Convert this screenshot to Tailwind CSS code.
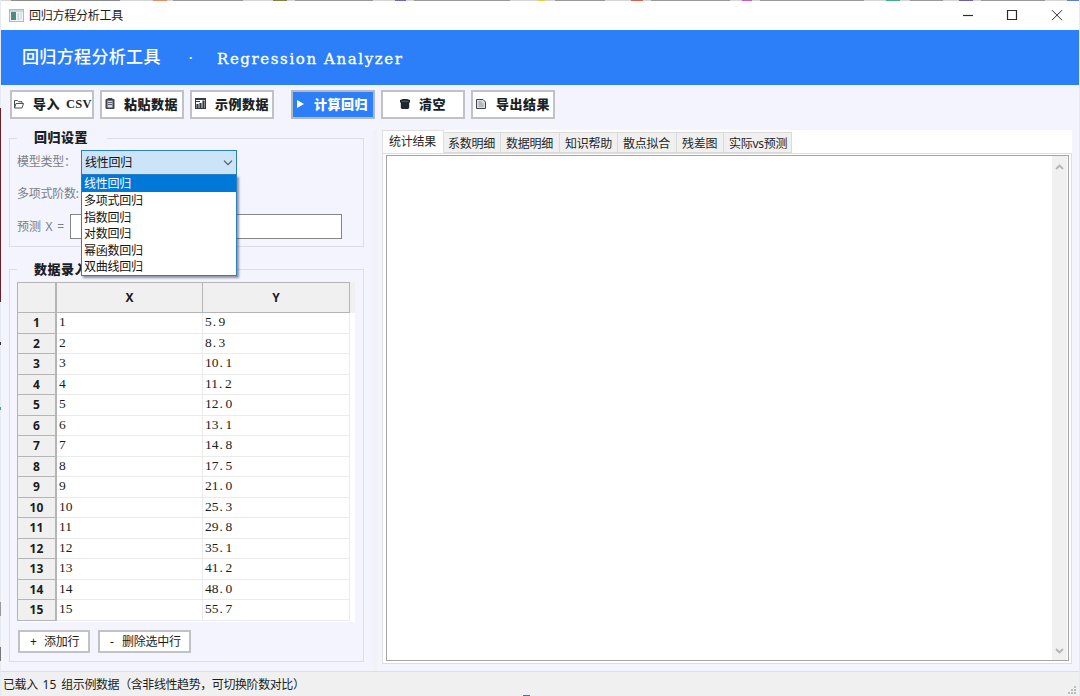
<!DOCTYPE html>
<html lang="zh-CN">
<head>
<meta charset="utf-8">
<title>回归方程分析工具</title>
<script src="https://cdn.jsdelivr.net/npm/@tailwindcss/browser@4"></script>
</head>
<body class="w-[1080px] h-[696px] overflow-hidden bg-[#f3f4fd] font-['Noto_Sans','Noto_Sans_CJK_SC',sans-serif] text-[12px] tracking-[-0.25px] text-[#1c1c1c] relative">
<div class="flex h-full flex-col border-x border-[#e6eaf3]">
  <!-- strip of the desktop above the window -->
  <div class="flex h-px shrink-0 bg-[#d5d5d5]"><i class="ml-[10px] w-[110px] bg-[#8d8d8d]"></i><i class="ml-[33px] w-[14px] bg-[#e28a62]"></i><i class="ml-[6px] w-[70px] bg-[#999]"></i><i class="ml-[30px] w-[14px] bg-[#7f8144]"></i><i class="ml-[8px] w-[78px] bg-[#999]"></i><i class="ml-[22px] w-[12px] bg-[#6a66c4]"></i><i class="ml-[8px] w-[96px] bg-[#999]"></i><i class="ml-[28px] w-[7px] bg-[#e6c74a]"></i><i class="ml-[10px] w-[50px] bg-[#999]"></i><i class="ml-[26px] w-[12px] bg-[#d8604f]"></i><i class="ml-[8px] w-[80px] bg-[#999]"></i><i class="ml-[12px] w-[10px] bg-[#c95bc4]"></i><i class="ml-[8px] w-[104px] bg-[#999]"></i><i class="ml-[22px] w-[14px] bg-[#3fae8c]"></i><i class="ml-[10px] w-[34px] bg-[#999]"></i><i class="ml-[16px] w-[14px] bg-[#6a5fae]"></i><i class="ml-[8px] w-[64px] bg-[#999]"></i><i class="ml-[22px] w-[12px] bg-[#5b7fd8]"></i></div>
  <header class="flex h-[29px] shrink-0 items-center bg-white pl-2">
    <svg class="h-[13px] w-[15px]" viewBox="0 0 15 13"><rect x=".5" y=".5" width="14" height="12" fill="#f2f4f6" stroke="#b4b9bf"/><rect x="1" y="1" width="13" height="2" fill="#cfd5db"/><rect x="2" y="3" width="5" height="8" fill="#4d8d80"/><rect x="8.500" y="4" width="1.500" height="7" fill="#c3d3ea"/><rect x="11" y="3" width="2" height="8" fill="#dde2e6"/></svg>
    <span class="ml-[5px] leading-[16px]">回归方程分析工具</span>
    <svg class="relative -top-px ml-auto mr-[16px] h-[12px] w-[102px]" viewBox="0 0 102 12" fill="none" stroke="#2b2b2b"><path d="M2 6.500h10" stroke-width="1.200"/><path d="M46.500 1.500h9v9h-9z" stroke-width="1.200"/><path d="M91 1.200l10 10M101 1.200l-10 10"/></svg>
  </header>
  <div class="flex h-[55px] shrink-0 items-center bg-[#2d7ff9] pl-[21px] text-white">
    <span class="w-[167px] pb-[2px] text-[17px] font-medium leading-[22px] tracking-[0.35px]">回归方程分析工具</span>
    <span class="w-[28px] font-bold">·</span>
    <span class="pt-[2px] font-['DejaVu_Serif',serif] text-[15px] leading-[20px] tracking-[1.6px] [-webkit-text-stroke:0.3px_white]">Regression Analyzer</span>
  </div>
  <nav class="flex h-[45px] shrink-0 pl-[9px] pt-[5px] text-[13px] font-black tracking-[0.5px] text-[#1b1f27]">
    <div class="mr-[6px] flex h-[29px] w-[84px] items-center border-2 border-[#c0c2c6] bg-white pl-px pb-[2px]">
      <svg class="h-[10px] w-[11px] shrink-0" viewBox="0 0 11 10" fill="none" stroke="#4b4f57"><path d="M1.500 9V1.500h3l1 1.200h3.500V4.500M1.500 9L3 4.500h7.500L9 9z"/></svg>
      <span class="ml-[9px] whitespace-nowrap leading-[18px]">导入</span><span class="ml-[6px] font-['Liberation_Serif',serif] text-[12.5px] font-bold leading-[18px] tracking-[0.3px]">CSV</span>
    </div>
    <div class="mr-[6px] flex h-[29px] w-[84px] items-center border-2 border-[#c0c2c6] bg-white pl-[3px] pb-[2px]">
      <svg class="h-[11px] w-[10px] shrink-0" viewBox="0 0 10 11"><rect x=".5" y="1" width="9" height="10" rx="1" fill="#3e424b"/><rect x="2.500" y="2.500" width="5" height="7" fill="#d7d9dd"/><path d="M3 0h4v2H3zM3 4.500h4M3 6.500h4" stroke="#3e424b" stroke-width=".8" fill="#3e424b"/></svg>
      <span class="ml-[9px] whitespace-nowrap leading-[18px]">粘贴数据</span>
    </div>
    <div class="mr-[17px] flex h-[29px] w-[84px] items-center border-2 border-[#c0c2c6] bg-white pl-[3px] pb-[2px]">
      <svg class="h-[11px] w-[11px] shrink-0" viewBox="0 0 11 11"><rect x=".5" y=".5" width="10" height="10" fill="#fff" stroke="#343943"/><path d="M1 1.500h9M1 3.500h4" stroke="#343943"/><path d="M2.500 10V6M5.500 10V5M8.500 10V2.500" stroke="#343943" stroke-width="2.200"/></svg>
      <span class="ml-[9px] whitespace-nowrap leading-[18px]">示例数据</span>
    </div>
    <div class="mr-[6px] flex h-[29px] w-[84px] items-center border-2 border-[#b2b9c6] bg-[#2d7ff9] pl-[4px] pb-[2px] text-white">
      <svg class="h-[8px] w-[8px] shrink-0" viewBox="0 0 8 8" fill="#fff"><path d="M0 0l7 4L0 8z"/></svg>
      <span class="ml-[9px] whitespace-nowrap leading-[18px]">计算回归</span>
    </div>
    <div class="mr-[6px] flex h-[29px] w-[84px] items-center border-2 border-[#c0c2c6] bg-white pl-[17px] pb-[2px]">
      <svg class="h-[10px] w-[10px] shrink-0" viewBox="0 0 10 10"><path d="M0 1l3-1h4l3 1v2.500H9.200V9L8 10H2L.8 9V3.500H0z" fill="#20262f"/><path d="M1.500 2.300h7" stroke="#717780" stroke-width=".7"/></svg>
      <span class="ml-[9px] whitespace-nowrap leading-[18px]">清空</span>
    </div>
    <div class="flex h-[29px] w-[84px] items-center border-2 border-[#c0c2c6] bg-white pl-[3px] pb-[2px]">
      <svg class="h-[10px] w-[10px] shrink-0" viewBox="0 0 10 10"><path d="M.5 .5h6.500l2.500 2.500v6.500h-9z" fill="#dadce1" stroke="#41454e"/><path d="M2.500 3h3M2.500 5h5M2.500 7h5" stroke="#7b7f87" stroke-width=".8"/></svg>
      <span class="ml-[10px] whitespace-nowrap leading-[18px]">导出结果</span>
    </div>
  </nav>
  <main class="flex h-[541px] shrink-0">
    <section class="w-[372px] shrink-0 pl-[8px]">
      <fieldset class="relative mt-[8px] h-[109px] w-[355px] border border-[#dcdde5] text-[#7c7e84]">
        <b class="absolute left-[7px] top-[-11px] w-[90px] bg-[#f3f4fd] pl-[17px] text-[13px] font-black leading-[18px] tracking-[0.5px] text-[#1b1f27]">回归设置</b>
        <div class="flex flex-col pl-[7px] pt-[14px]">
          <div class="leading-[18px]">模型类型：</div>
          <div class="mt-[14px] leading-[18px]">多项式阶数:</div>
          <div class="mt-[11px] flex items-center"><span class="w-[53px] whitespace-nowrap leading-[18px] tracking-normal [word-spacing:1.5px]">预测 X =</span><span class="h-[25px] w-[272px] border border-[#858585] bg-white"></span></div>
        </div>
      </fieldset>
      <fieldset class="relative mt-[22px] h-[393px] w-[355px] border border-[#dcdde5]">
        <b class="absolute left-[7px] top-[-10px] w-[90px] bg-[#f3f4fd] pl-[17px] text-[13px] font-black leading-[18px] tracking-[0.5px] text-[#1b1f27]">数据录入</b>
        <div class="ml-[7px] mt-[12px] h-[340px] w-[338px] bg-white">
          <div class="flex h-[31px] bg-[#f0f0f0]"><div class="w-[40px] border border-r-2 border-[#b5b5b5]"></div><div class="flex w-[146px] items-center justify-center border-y border-r border-[#b5b5b5] font-bold">X</div><div class="flex w-[147px] items-center justify-center border-y border-r border-[#b5b5b5] font-bold">Y</div></div>
          <div id="rows"></div>
        </div>
        <div class="ml-[8px] mt-[8px] flex gap-[8px]">
          <div class="flex h-[23px] w-[72px] items-center border-2 border-[#c0c2c6] bg-white pl-[10px] leading-[18px]"><span class="w-[14px]">+</span>添加行</div>
          <div class="flex h-[23px] w-[93px] items-center border-2 border-[#c0c2c6] bg-white pl-[10px] leading-[18px]"><span class="w-[12px]">-</span>删除选中行</div>
        </div>
      </fieldset>
    </section>
    <div class="h-full w-[4px] bg-[#f2f2f6]"></div>
    <section class="ml-[5px] flex h-[534px] w-[690px] flex-col">
      <div class="flex h-[23px] shrink-0 items-end bg-white leading-[18px] text-[#262626]">
        <div class="h-[23px] w-[62px] border-x border-t border-[#dfdfdf] pl-[6px] pt-[2px]">统计结果</div>
        <div class="h-[21px] w-[57px] border-b border-r border-t border-[#dadada] bg-[#f0f0f0] pl-[4px] pt-[2px]">系数明细</div>
        <div class="h-[21px] w-[59px] border-b border-r border-t border-[#dadada] bg-[#f0f0f0] pl-[5px] pt-[2px]">数据明细</div>
        <div class="h-[21px] w-[58px] border-b border-r border-t border-[#dadada] bg-[#f0f0f0] pl-[5px] pt-[2px]">知识帮助</div>
        <div class="h-[21px] w-[59px] border-b border-r border-t border-[#dadada] bg-[#f0f0f0] pl-[5px] pt-[2px]">散点拟合</div>
        <div class="h-[21px] w-[47px] border-b border-r border-t border-[#dadada] bg-[#f0f0f0] pl-[5px] pt-[2px]">残差图</div>
        <div class="h-[21px] w-[68px] whitespace-nowrap border-b border-r border-t border-[#dadada] bg-[#f0f0f0] pl-[5px] pt-[2px]">实际vs预测</div>
      </div>
      <div class="h-[511px] border border-[#dfdfdf] bg-white pl-[3px] pr-[2px] pt-px pb-[2px]">
        <div class="flex h-full justify-end border border-[#a4a4a4] pr-px">
          <div class="flex w-[15px] flex-col items-center justify-between bg-[#f0f0f0] pt-[8px] pb-[6px]">
            <svg class="h-[6px] w-[9px]" viewBox="0 0 9 6" fill="none" stroke="#b4b4b4" stroke-width="1.800"><path d="M1 5l3.500-3.500L8 5"/></svg>
            <svg class="h-[6px] w-[9px]" viewBox="0 0 9 6" fill="none" stroke="#b4b4b4" stroke-width="1.800"><path d="M1 1l3.500 3.500L8 1"/></svg>
          </div>
        </div>
      </div>
    </section>
  </main>
  <footer class="flex h-[25px] shrink-0 items-center border-t border-[#dedfe2] bg-[#f0f0f0] pl-[2px]">
    <span class="pt-px leading-[18px] tracking-[-0.42px] [word-spacing:2px]">已载入 <span class="tracking-[0.2px]">15</span> 组示例数据（含非线性趋势，可切换阶数对比）</span>
    <svg class="ml-auto mr-[2px] mt-[13px] h-[9px] w-[9px]" viewBox="0 0 9 9" fill="#bcbcbc"><path d="M6 0h2v2H6zM6 3h2v2H6zM6 6h2v2H6zM3 3h2v2H3zM3 6h2v2H3zM0 6h2v2H0z"/></svg>
  </footer>
</div>
<!-- open model drop-down -->
<div class="absolute left-[81px] top-[150px] w-[156px] leading-[16px] text-[#111]">
  <div class="flex h-[25px] items-center border border-[#2a7fc0] bg-[#cce4f7] pl-[3px]">线性回归<svg class="ml-auto mr-[3px] h-[6px] w-[10px]" viewBox="0 0 10 6" fill="none" stroke="#505a64" stroke-width="1.200"><path d="M1 .7l4 4 4-4"/></svg></div>
  <div class="h-[101px] border border-t-0 border-[#2a7fc0] bg-white shadow-[2px_2px_2px_rgba(60,70,90,0.55)]">
    <div class="h-[17px] bg-[#0078d7] pl-[2px] pt-px text-white">线性回归</div>
    <div class="h-[16.600px] pl-[2px] pt-px">多项式回归</div>
    <div class="h-[16.600px] pl-[2px] pt-px">指数回归</div>
    <div class="h-[16.600px] pl-[2px] pt-px">对数回归</div>
    <div class="h-[16.600px] pl-[2px] pt-px">幂函数回归</div>
    <div class="h-[16.600px] pl-[2px] pt-px">双曲线回归</div>
  </div>
</div>
<!-- slivers of the desktop left of the window -->
<div class="absolute left-0 top-[108px] h-[194px] w-px bg-[#6b1f26]"></div>
<div class="absolute left-0 top-[342px] h-[3px] w-px bg-[#333]"></div>
<div class="absolute left-0 top-[407px] h-[3px] w-px bg-[#3aa58a]"></div>
<div class="absolute left-0 top-[602px] h-[14px] w-px bg-[#999]"></div>
<div class="absolute left-0 top-[647px] h-[14px] w-px bg-[#777]"></div>
<div class="absolute left-[523px] top-[695px] h-px w-[7px] bg-[#4a6fb0]"></div>
<script>
const ys = ['5.9','8.3','10.1','11.2','12.0','13.1','14.8','17.5','21.0','25.3','29.8','35.1','41.2','48.0','55.7'];
const mono = s => s.replace('.', '<span class="inline-block w-[6.800px] pl-px">.</span>');
document.getElementById('rows').innerHTML = ys.map((y, i) => `
<div class="flex h-[20.530px] text-[13.500px] leading-[18px] tracking-[0.05px] font-['Liberation_Serif',serif]">
<div class="flex w-[40px] items-center justify-center border-b border-l border-r-2 border-[#b5b5b5] bg-[#f0f0f0] pt-px font-['Noto_Sans',sans-serif] text-[12px] font-bold">${i + 1}</div>
<div class="w-[146px] border-b border-r border-[#ebebeb] pl-[2px]">${i + 1}</div>
<div class="w-[147px] border-b border-r border-[#ebebeb] pl-[2px]">${mono(y)}</div></div>`).join('');
</script>
</body>
</html>
